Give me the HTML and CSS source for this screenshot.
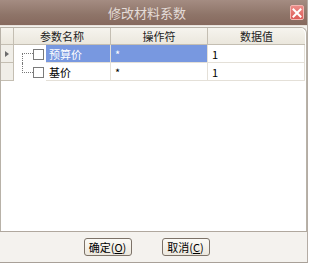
FILE: index.html
```html
<!DOCTYPE html>
<html lang="zh">
<head>
  <meta charset="UTF-8" />
  <title>修改材料系数</title>
  <link rel="stylesheet" href="styles.css">
</head>
<body>
  <div class="window">
    <div class="titlebar">
      <span class="title">修改材料系数</span>
      <span class="close">
        <svg width="10" height="10" viewBox="0 0 10 10"><path d="M1.5 1.5 L8.5 8.5 M8.5 1.5 L1.5 8.5" stroke="#fff" stroke-width="2" stroke-linecap="square"/></svg>
      </span>
    </div>
    <div class="grid">
      <div class="head sel"></div>
      <div class="head">参数名称</div>
      <div class="head">操作符</div>
      <div class="head last">数据值</div>

      <div class="sel"><span class="arrow"></span></div>
      <div class="name first">
        <span class="tree"></span><span class="check"></span><span class="text active">预算价</span>
      </div>
      <div class="cell active">*</div>
      <div class="cell">1</div>

      <div class="sel"></div>
      <div class="name second">
        <span class="tree"></span><span class="check"></span><span class="text">基价</span>
      </div>
      <div class="cell">*</div>
      <div class="cell">1</div>
    </div>
    <div class="footer">
      <button>确定(<u>O</u>)</button>
      <button>取消(<u>C</u>)</button>
    </div>
  </div>
</body>
</html>
```
FILE: styles.css
```css
body {
  margin: 0;
  background: #fff;
  font-family: "Noto Sans CJK SC", "Liberation Sans", sans-serif;
}
.window {
  width: 308px;
  height: 263px;
  background: #f4f2ee;
  display: flex;
  flex-direction: column;
  border-right: 1px solid #b4aca4;
  border-bottom: 1px solid #a8a098;
  box-sizing: border-box;
}
.titlebar {
  height: 25px;
  flex: none;
  display: flex;
  align-items: center;
  background: linear-gradient(#a48c82, #8e7468 60%, #86695e);
  border-bottom: 1px solid #e8e2dc;
}
.title {
  flex: 1;
  text-align: center;
  color: #e4dcd8;
  font-size: 13px;
  padding-left: 4px;
}
.close {
  width: 14px;
  height: 15px;
  margin-right: 3px;
  border-radius: 2px;
  border: 1px solid #f4b4b0;
  background: linear-gradient(#ec8c88, #dc5c58);
  display: flex;
  align-items: center;
  justify-content: center;
  box-sizing: border-box;
}
.grid {
  flex: 1;
  margin-top: 1px;
  background: #fff;
  border: 1px solid #b8b2a8;
  border-top-right-radius: 6px;
  border-bottom: none;
  display: grid;
  grid-template-columns: 13px 97px 97px 97px;
  grid-template-rows: 17px 18px 18px;
  align-content: start;
  font-size: 11px;
  color: #000;
}
.head {
  background: linear-gradient(#f6f4ee, #ebe7dd);
  border-right: 1px solid #c4beb2;
  border-bottom: 1px solid #c4beb2;
  display: flex;
  align-items: center;
  justify-content: center;
  color: #222;
}
.head.last {
  border-right: none;
  border-top-right-radius: 6px;
}
.sel {
  background: #f0eee8;
  border-right: 1px solid #c4beb2;
  border-bottom: 1px solid #c4beb2;
  display: flex;
  align-items: center;
  justify-content: center;
}
.head.sel {
  background: linear-gradient(#f6f4ee, #ebe7dd);
}
.arrow {
  width: 0;
  height: 0;
  border-top: 3px solid transparent;
  border-bottom: 3px solid transparent;
  border-left: 4px solid #6c6c6c;
}
.name {
  display: flex;
  align-items: stretch;
  border-right: 1px solid #e4e0d8;
}
.tree {
  width: 10px;
  margin-left: 8px;
  flex: none;
}
.first .tree {
  margin-top: 8px;
  border-top: 1px dotted #777;
  border-left: 1px dotted #777;
}
.second .tree {
  margin-bottom: 8px;
  border-bottom: 1px dotted #777;
  border-left: 1px dotted #777;
}
.check {
  width: 11px;
  height: 11px;
  flex: none;
  align-self: center;
  border: 1px solid #7a7a7a;
  background: #fff;
  box-sizing: border-box;
  margin-right: 2px;
}
.text {
  flex: 1;
  display: flex;
  align-items: center;
  padding-left: 3px;
  border-bottom: 1px solid #e4e0d8;
}
.cell {
  display: flex;
  align-items: center;
  padding-left: 4px;
  border-right: 1px solid #e4e0d8;
  border-bottom: 1px solid #e4e0d8;
}
.active {
  background: #7898e0;
  color: #fff;
}
.cell.active {
  color: #fff;
}
.footer {
  height: 30px;
  flex: none;
  border-top: 1px solid #b0a89e;
  display: flex;
  align-items: center;
  justify-content: center;
  gap: 30px;
  padding-right: 14px;
}
button {
  font-family: inherit;
  font-size: 11px;
  height: 18px;
  width: 48px;
  padding: 0;
  border: 1px solid #7c7268;
  border-radius: 3px;
  background: linear-gradient(#fbfaf6, #ece8de);
  color: #000;
  line-height: 16px;
}
```
